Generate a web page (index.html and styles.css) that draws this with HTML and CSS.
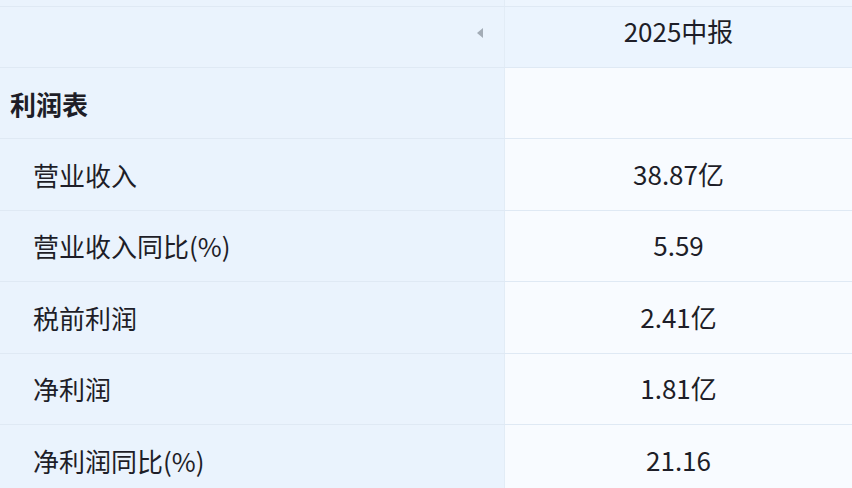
FILE: index.html
```html
<!DOCTYPE html>
<html lang="zh-CN">
<head>
    <meta charset="UTF-8">
    <meta name="viewport" content="width=device-width, initial-scale=1.0">
    <title>利润表</title>
    <link rel="stylesheet" href="styles.css">
</head>
<body>

    <div class="report">
        <div class="row top-strip">
            <div class="cell label"></div>
            <div class="cell value"></div>
        </div>

        <div class="row head">
            <div class="cell label">
                <span class="arrow"></span>
            </div>
            <div class="cell value">2025中报</div>
        </div>

        <div class="row section">
            <div class="cell label">利润表</div>
            <div class="cell value"></div>
        </div>

        <div class="row item">
            <div class="cell label">营业收入</div>
            <div class="cell value">38.87亿</div>
        </div>

        <div class="row item">
            <div class="cell label">营业收入同比(%)</div>
            <div class="cell value">5.59</div>
        </div>

        <div class="row item">
            <div class="cell label">税前利润</div>
            <div class="cell value">2.41亿</div>
        </div>

        <div class="row item">
            <div class="cell label">净利润</div>
            <div class="cell value">1.81亿</div>
        </div>

        <div class="row item">
            <div class="cell label">净利润同比(%)</div>
            <div class="cell value">21.16</div>
        </div>
    </div>

</body>
</html>
```

FILE: styles.css
```css
body {
    margin: 0;
    height: 488px;
    overflow: hidden;
    font-family: "Noto Sans CJK SC", "Noto Sans", sans-serif;
    color: #1e1e28;
    background-color: #f8fbff;
}

.row {
    display: grid;
    grid-template-columns: 505px 1fr;
    height: 71.4px;
    box-sizing: border-box;
    border-bottom: 1px solid #dfe9f4;
}

.cell {
    display: flex;
    align-items: center;
    font-size: 26px;
}

.label {
    background-color: #eaf3fd;
    border-right: 1px solid #e2ecf6;
    padding-left: 33px;
}

.value {
    justify-content: center;
    background-color: #f8fbff;
}

.top-strip {
    height: 7px;
}

.top-strip .value {
    background-color: #edf5fe;
}

.head {
    height: 61px;
}

.head .label {
    justify-content: flex-end;
    padding-right: 21px;
    padding-bottom: 8px;
}

.head .value {
    background-color: #ebf4fe;
    padding-bottom: 14px;
}

.arrow {
    width: 0;
    height: 0;
    border-top: 5px solid transparent;
    border-bottom: 5px solid transparent;
    border-right: 6px solid #a3acb6;
}

.section .label {
    padding-left: 10px;
    font-weight: bold;
}

.item .value {
    padding-bottom: 2px;
}
```
